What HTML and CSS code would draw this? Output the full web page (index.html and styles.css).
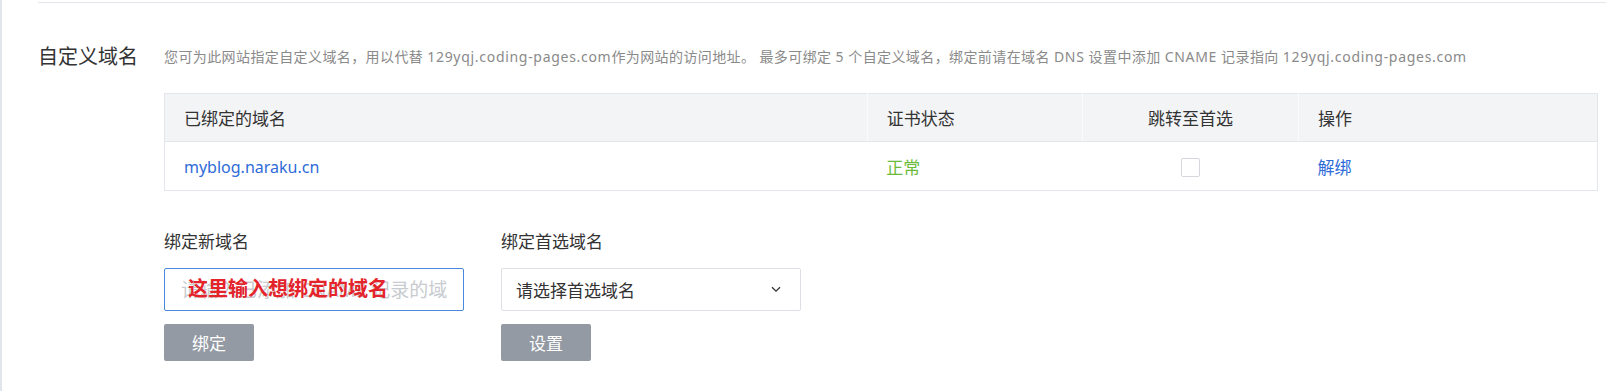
FILE: index.html
```html
<!DOCTYPE html>
<html lang="zh-CN">
<head>
    <meta charset="utf-8">
    <title>自定义域名</title>
    <link rel="stylesheet" href="styles.css">
</head>
<body>
    <div class="page">
        <div class="section">
            <div class="label">自定义域名</div>
            <div class="content">
                <p class="desc">您可为此网站指定自定义域名，用以代替 <span class="en">129yqj.coding-pages.com</span>作为网站的访问地址。 最多可绑定 <span class="en">5</span> 个自定义域名，绑定前请在域名 <span class="en">DNS</span> 设置中添加 <span class="en">CNAME</span> 记录指向 <span class="en">129yqj.coding-pages.com</span></p>

                <table class="domains">
                    <thead>
                        <tr>
                            <th class="col-name">已绑定的域名</th>
                            <th class="col-cert">证书状态</th>
                            <th class="col-jump">跳转至首选</th>
                            <th class="col-op">操作</th>
                        </tr>
                    </thead>
                    <tbody>
                        <tr>
                            <td><a href="#" class="link">myblog.naraku.cn</a></td>
                            <td class="ok">正常</td>
                            <td class="col-jump"><span class="check"></span></td>
                            <td><a href="#" class="link">解绑</a></td>
                        </tr>
                    </tbody>
                </table>

                <div class="forms">
                    <div class="field">
                        <label for="newDomain">绑定新域名</label>
                        <div class="input-wrap">
                            <input type="text" id="newDomain" class="input focus" placeholder="请输入已添加 CNAME 记录的域名">
                            <span class="note">这里输入想绑定的域名</span>
                        </div>
                        <button class="btn">绑定</button>
                    </div>
                    <div class="field">
                        <label>绑定首选域名</label>
                        <div class="select">
                            <span>请选择首选域名</span>
                            <svg width="10" height="7" viewBox="0 0 10 7"><path d="M1 1.2 L5 5.2 L9 1.2" fill="none" stroke="#333" stroke-width="1.3"/></svg>
                        </div>
                        <button class="btn">设置</button>
                    </div>
                </div>
            </div>
        </div>
    </div>
</body>
</html>
```

FILE: styles.css
```css
body {
    margin: 0;
    background: #fff;
    color: #333;
    font-family: "Noto Sans", "Noto Sans CJK SC", sans-serif;
}

.page {
    border-left: 2px solid #e1e6ec;
    height: 391px;
    box-sizing: border-box;
    padding: 2px 0 0 36px;
}

.section {
    display: flex;
    border-top: 1px solid #e3e6ea;
    padding-top: 43px;
}

.label {
    width: 126px;
    flex: none;
    font-size: 20px;
    line-height: 22px;
    color: #333;
}

.content {
    flex: 1;
    padding-right: 8px;
}

.desc {
    margin: 0;
    font-size: 14px;
    letter-spacing: 0.4px;
    line-height: 22px;
    height: 22px;
    color: #8a8a8a;
    white-space: nowrap;
}

.desc .en {
    letter-spacing: 0.7px;
}

.domains {
    width: 100%;
    margin-top: 25px;
    border-collapse: collapse;
    border: 1px solid #e3e6ea;
    font-size: 17px;
}

.domains th {
    height: 47px;
    background: #f3f4f6;
    font-weight: normal;
    text-align: left;
    padding: 0 0 0 19px;
    border-left: 1px solid #fbfbfc;
    border-bottom: 1px solid #e3e6ea;
    color: #333;
}

.domains th:first-child {
    border-left: none;
}

.domains td {
    height: 48px;
    padding: 0 0 0 19px;
}

.col-name { width: 685px; }
.col-cert { width: 196px; }
.col-op { width: 280px; }

.domains .col-jump {
    width: 216px;
    text-align: center;
    padding-left: 0;
}

.link {
    color: #2e6bd8;
    text-decoration: none;
}

.domains td:first-child .link {
    font-size: 16px;
}

.ok {
    color: #6cbb3c;
}

.check {
    display: inline-block;
    width: 17px;
    height: 17px;
    border: 1px solid #d4d7dc;
    border-radius: 2px;
    vertical-align: middle;
}

.forms {
    display: flex;
    gap: 37px;
    margin-top: 40px;
}

.field {
    width: 300px;
}

.field label {
    display: block;
    font-size: 17px;
    line-height: 22px;
    color: #333;
}

.input-wrap {
    position: relative;
    margin-top: 15px;
}

.input {
    display: block;
    width: 100%;
    height: 43px;
    box-sizing: border-box;
    border: 1px solid #d9dce1;
    border-radius: 2px;
    padding: 0 15px 0 16px;
    font-size: 19px;
    font-family: inherit;
    color: #333;
    outline: none;
}

.input.focus {
    border-color: #4a88dc;
}

.input::placeholder {
    color: #c8cbd0;
}

.note {
    position: absolute;
    left: 24px;
    top: 9px;
    font-size: 20px;
    font-weight: bold;
    line-height: 24px;
    color: #e4232b;
    pointer-events: none;
}

.select {
    display: flex;
    align-items: center;
    justify-content: space-between;
    height: 43px;
    box-sizing: border-box;
    margin-top: 15px;
    border: 1px solid #dcdfe4;
    border-radius: 2px;
    padding: 0 19px 0 14px;
    font-size: 17px;
    color: #333;
}

.btn {
    display: block;
    margin-top: 13px;
    width: 90px;
    height: 37px;
    border: none;
    border-radius: 2px;
    background: #949aa3;
    color: #fff;
    font-size: 17px;
    font-family: inherit;
    cursor: pointer;
}
```
